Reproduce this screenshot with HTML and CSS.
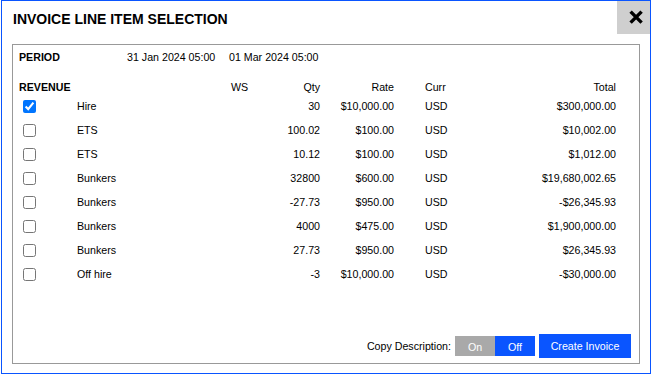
FILE: index.html
```html
<!DOCTYPE html>
<html>
<head>
<meta charset="utf-8">
<link rel="stylesheet" href="styles.css">
</head>
<body>
<div class="dialog">
  <div class="dlg-head">
    <div class="dlg-title">INVOICE LINE ITEM SELECTION</div>
    <div class="dlg-close">
      <svg width="33" height="33" viewBox="0 0 33 33">
        <path d="M13.6 10.6 L24.6 21.6 M24.6 10.6 L13.6 21.6" stroke="#000" stroke-width="3.4" fill="none"/>
      </svg>
    </div>
  </div>
  <div class="panel">
    <div class="period">
      <span class="bold">PERIOD</span>
      <span>31 Jan 2024 05:00</span>
      <span>01 Mar 2024 05:00</span>
    </div>
    <div class="row head">
      <span class="bold">REVENUE</span>
      <span></span>
      <span>WS</span>
      <span class="num">Qty</span>
      <span class="num">Rate</span>
      <span class="curr">Curr</span>
      <span class="num">Total</span>
    </div>
    <div class="row item"><span><input type="checkbox" checked></span><span>Hire</span><span></span><span class="num">30</span><span class="num">$10,000.00</span><span class="curr">USD</span><span class="num">$300,000.00</span></div>
    <div class="row item"><span><input type="checkbox"></span><span>ETS</span><span></span><span class="num">100.02</span><span class="num">$100.00</span><span class="curr">USD</span><span class="num">$10,002.00</span></div>
    <div class="row item"><span><input type="checkbox"></span><span>ETS</span><span></span><span class="num">10.12</span><span class="num">$100.00</span><span class="curr">USD</span><span class="num">$1,012.00</span></div>
    <div class="row item"><span><input type="checkbox"></span><span>Bunkers</span><span></span><span class="num">32800</span><span class="num">$600.00</span><span class="curr">USD</span><span class="num">$19,680,002.65</span></div>
    <div class="row item"><span><input type="checkbox"></span><span>Bunkers</span><span></span><span class="num">-27.73</span><span class="num">$950.00</span><span class="curr">USD</span><span class="num">-$26,345.93</span></div>
    <div class="row item"><span><input type="checkbox"></span><span>Bunkers</span><span></span><span class="num">4000</span><span class="num">$475.00</span><span class="curr">USD</span><span class="num">$1,900,000.00</span></div>
    <div class="row item"><span><input type="checkbox"></span><span>Bunkers</span><span></span><span class="num">27.73</span><span class="num">$950.00</span><span class="curr">USD</span><span class="num">$26,345.93</span></div>
    <div class="row item"><span><input type="checkbox"></span><span>Off hire</span><span></span><span class="num">-3</span><span class="num">$10,000.00</span><span class="curr">USD</span><span class="num">-$30,000.00</span></div>
    <div class="footer">
      <span class="copy-label">Copy Description:</span>
      <div class="toggle">
        <span class="tg tg-on">On</span>
        <span class="tg tg-off">Off</span>
      </div>
      <button class="create">Create Invoice</button>
    </div>
  </div>
</div>
</body>
</html>
```
FILE: styles.css
```css
html, body {
  margin: 0;
  padding: 0;
  background: #fff;
}
body {
  font-family: "Liberation Sans", Arial, sans-serif;
  font-size: 10.67px;
  color: #000;
}
.dialog {
  box-sizing: border-box;
  margin-left: 1px;
  width: 650px;
  height: 374px;
  border: 1px solid #0a55ff;
  display: flex;
  flex-direction: column;
  background: #fff;
}
.dlg-head {
  display: flex;
  align-items: flex-start;
  height: 33px;
  flex: none;
}
.dlg-title {
  flex: 1;
  padding-left: 11px;
  margin-top: 10px;
  font-size: 14px;
  font-weight: bold;
}
.dlg-close {
  width: 33px;
  height: 33px;
  background: #cfcfcf;
}
.dlg-close svg {
  display: block;
}
.panel {
  flex: 1;
  margin: 10px 10px 9px 10px;
  border: 1px solid #999;
  display: flex;
  flex-direction: column;
  padding: 0 23px 0 6px;
}
.bold {
  font-weight: bold;
}
.period {
  display: grid;
  grid-template-columns: 108px 102px auto;
  height: 24px;
  align-items: center;
}
.row {
  display: grid;
  grid-template-columns: 58px 154px 39px 50px 74px 91px 1fr;
  align-items: center;
}
.row.head {
  height: 14px;
  margin-top: 11px;
}
.row.item {
  height: 24px;
}
.row input {
  display: block;
  margin: 3px 3px 3px 4px;
}
.num {
  text-align: right;
}
.curr {
  padding-left: 31px;
}
.footer {
  margin-top: auto;
  margin-right: -15px;
  padding-bottom: 5px;
  display: flex;
  justify-content: flex-end;
  align-items: center;
}
.copy-label {
  margin-right: 4px;
}
.toggle {
  display: flex;
  height: 20px;
  margin-right: 4px;
}
.tg {
  width: 40px;
  display: flex;
  align-items: center;
  justify-content: center;
  padding-top: 2px;
  box-sizing: border-box;
  color: #fff;
}
.tg-on {
  background: #a9a9a9;
}
.tg-off {
  background: #0a55ff;
}
.create {
  font-family: inherit;
  font-size: 10.67px;
  color: #fff;
  background: #0a55ff;
  border: none;
  border-radius: 0;
  height: 24px;
  width: 92px;
  padding: 0;
}
```
